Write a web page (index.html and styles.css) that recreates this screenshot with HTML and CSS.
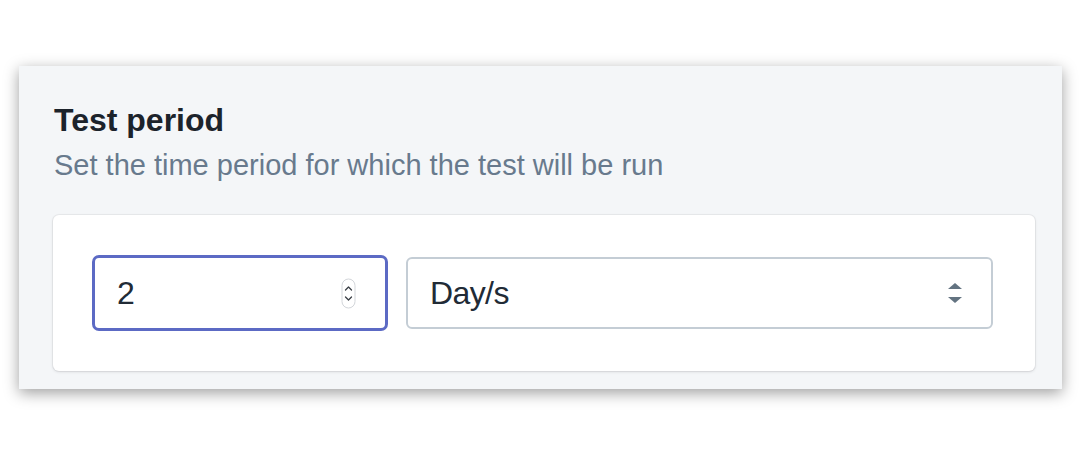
FILE: index.html
```html
<!DOCTYPE html>
<html>
<head>
<meta charset="utf-8">
<link rel="stylesheet" href="styles.css">
</head>
<body>
<div class="page">
  <section class="panel">
    <h2 class="title">Test period</h2>
    <p class="subtitle">Set the time period for which the test will be run</p>
    <div class="card">
      <div class="field number focused">
        <span class="value">2</span>
        <svg class="spinner" width="15" height="31" viewBox="0 0 15 31">
          <rect x="1" y="1" width="13" height="29" rx="6.5" fill="#fff" stroke="#d3d6da" stroke-width="1"/>
          <path d="M4.5 12 L7.5 9 L10.5 12" fill="none" stroke="#3a3f45" stroke-width="1.3" stroke-linecap="round" stroke-linejoin="round"/>
          <path d="M4.5 19 L7.5 22 L10.5 19" fill="none" stroke="#3a3f45" stroke-width="1.3" stroke-linecap="round" stroke-linejoin="round"/>
        </svg>
      </div>
      <div class="field select">
        <span class="value">Day/s</span>
        <svg class="arrows" width="14" height="21" viewBox="0 0 14 21">
          <path d="M7 0 L14 6 L0 6 Z" fill="#637381"/>
          <path d="M0 14 L14 14 L7 20 Z" fill="#637381"/>
        </svg>
      </div>
    </div>
  </section>
</div>
</body>
</html>
```

FILE: styles.css
```css
html, body {
  margin: 0;
  padding: 0;
  background: #ffffff;
}

body {
  font-family: "Liberation Sans", Arial, sans-serif;
  color: #212b36;
}

.page {
  box-sizing: border-box;
  min-height: 455px;
  padding: 66px 0 66px 19px;
}

.panel {
  box-sizing: border-box;
  width: 1043px;
  height: 323px;
  background: #f4f6f8;
  box-shadow: 0 4px 14px rgba(0, 0, 0, 0.38);
  padding: 34px 27px 18px 34px;
}

.title {
  margin: 0;
  font-size: 32px;
  line-height: 40px;
  font-weight: 700;
  color: #1c232b;
  padding-left: 1px;
}

.subtitle {
  margin: 5px 0 0 0;
  font-size: 29px;
  line-height: 40px;
  color: #687a8d;
  padding-left: 1px;
}

.card {
  box-sizing: border-box;
  margin-top: 30px;
  height: 156px;
  background: #ffffff;
  border-radius: 6px;
  box-shadow: 0 0 0 1px rgba(63, 63, 68, 0.06), 0 1px 3px rgba(63, 63, 68, 0.15);
  padding: 0 42px 0 39px;
  display: flex;
  align-items: center;
  gap: 18px;
}

.field {
  box-sizing: border-box;
  display: flex;
  align-items: center;
  justify-content: space-between;
  background: #ffffff;
  font-size: 32px;
  color: #212b36;
}

.number {
  width: 296px;
  height: 76px;
  border: 3px solid #5c6ac4;
  border-radius: 7px;
  padding: 0 29px 0 22px;
}

.select {
  flex: 1;
  height: 72px;
  border: 2px solid #c4cdd5;
  border-radius: 6px;
  padding: 0 29px 0 22px;
}

.select .value {
  letter-spacing: -0.6px;
}

.spinner {
  display: block;
}

.arrows {
  display: block;
}
```
